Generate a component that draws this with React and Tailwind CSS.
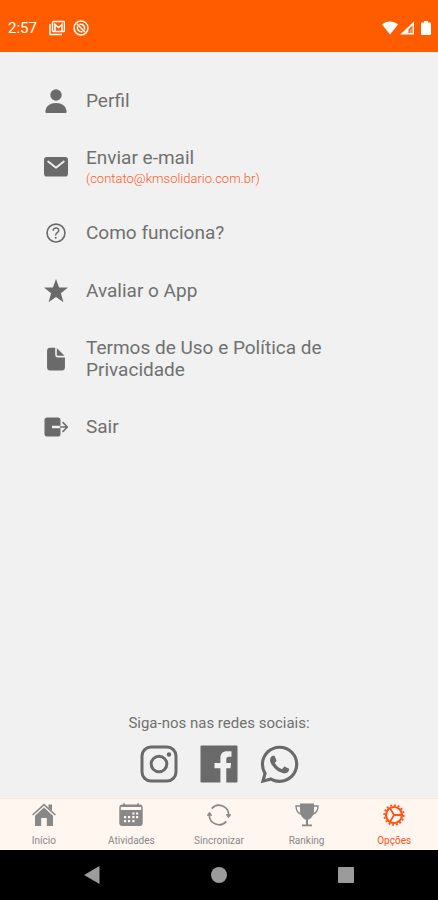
import React from 'react';
import { IoHelpCircleOutline, IoDocument, IoLogoWhatsapp } from 'react-icons/io5';

function PersonIcon() {
    return (
        <svg className="h-6 w-6" viewBox="0 0 24 24" fill="currentColor">
            <circle cx="12" cy="6" r="5.700" />
            <path d="M3 24a1.500 1.500 0 0 1-1.600-1.700C2 17 6 14 12 14s10 3 10.600 8.300A1.500 1.500 0 0 1 21 24z" />
        </svg>
    );
}

function MailIcon() {
    return (
        <svg className="h-6 w-6" viewBox="0 0 24 24" fill="none">
            <rect y="2" width="24" height="19.500" rx="2.800" fill="currentColor" />
            <path d="M4.200 6.500L12 12.800l7.800-6.300" stroke="#f1f1f1" strokeWidth="1.800" strokeLinecap="round" strokeLinejoin="round" />
        </svg>
    );
}

function StarIcon() {
    return (
        <svg className="h-6 w-6" viewBox="0 0 24 24" fill="currentColor">
            <path d="M12 0l3.100 8.400 8.900.2-7.100 5.600 2.500 9L12 18l-7.400 5.200 2.500-9L0 8.600l8.900-.2z" />
        </svg>
    );
}

function ExitIcon() {
    return (
        <svg className="h-6 w-6" viewBox="0 0 24 24" fill="none">
            <path d="M3 2.500h11A2.500 2.500 0 0 1 16.500 5v5.800H8v2.400h8.500V19a2.500 2.500 0 0 1-2.500 2.500H3A2.500 2.500 0 0 1 .5 19V5A2.500 2.500 0 0 1 3 2.500z" fill="currentColor" />
            <path d="M16.500 12H23M19 7.500l4.300 4.500-4.300 4.500" stroke="currentColor" strokeWidth="1.600" strokeLinecap="round" strokeLinejoin="round" />
        </svg>
    );
}

function InstagramIcon() {
    return (
        <svg className="h-[38px] w-[38px]" viewBox="0 0 38 38" fill="none" stroke="currentColor" strokeWidth="3">
            <rect x="2" y="2" width="34" height="34" rx="9" />
            <circle cx="19" cy="19" r="7.800" />
            <circle cx="29" cy="9.500" r="2.200" fill="currentColor" stroke="none" />
        </svg>
    );
}

function FacebookIcon() {
    return (
        <svg className="h-[38px] w-[38px]" viewBox="0 0 38 38" fill="currentColor">
            <path d="M1.500.5h35a1 1 0 0 1 1 1v35a1 1 0 0 1-1 1H26.300V23.200h4.200l.6-5.200h-4.800v-3.500c0-1.800.8-2.700 2.500-2.700H31.500V6.200H27c-4.400 0-6.600 2.600-6.600 7V18H14.500v5.200h5.900v14.300H1.500a1 1 0 0 1-1-1v-35a1 1 0 0 1 1-1z" />
        </svg>
    );
}

function HomeIcon() {
    return (
        <svg className="h-6 w-6" viewBox="0 0 24 24" fill="currentColor">
            <path d="M12 4.500l9 8.200V23h-6.200v-8H9.200v8H3V12.700z" />
            <path d="M.6 12L12 1.600 23.400 12" fill="none" stroke="currentColor" strokeWidth="1.600" />
            <path d="M16.500 1.500h3.500v6.500l-3.500-3.200z" />
        </svg>
    );
}

function CalendarIcon() {
    return (
        <svg className="h-6 w-6" viewBox="0 0 24 24" fill="currentColor">
            <path fillRule="evenodd" d="M3 1.500h1.200V.3h1.600v1.200h12.400V.3h1.600v1.200H21A2.700 2.700 0 0 1 23.700 4v16.500A2.700 2.700 0 0 1 21 23H3A2.700 2.700 0 0 1 .3 20.500V4A2.700 2.700 0 0 1 3 1.500zM1.800 4v3h20.400V4z" />
            <path d="M13.300 9.500h2.200v2h-2.200zM17 9.500h2.200v2H17zM5 13h2.200v2.200H5zM9 13h2.200v2.200H9zM13.300 13h2.200v2.200h-2.200zM17 13h2.200v2.200H17zM5 17h2.200v2.200H5zM9 17h2.200v2.200H9zM13.300 17h2.200v2.200h-2.200z" fill="#fff6f0" />
        </svg>
    );
}

function SyncIcon() {
    return (
        <svg className="h-6 w-6" viewBox="0 0 24 24" fill="none" stroke="currentColor" strokeWidth="1.600">
            <path d="M4.700 5.600A9.700 9.700 0 0 1 21.700 12M19.300 18.400A9.700 9.700 0 0 1 2.300 12" />
            <path d="M19 11.500h5l-2.500 3.500zM0 12.500h5L2.500 9z" fill="currentColor" strokeWidth="0.500" />
        </svg>
    );
}

function TrophyIcon() {
    return (
        <svg className="h-6 w-6" viewBox="0 0 24 24" fill="currentColor">
            <path d="M5 .5h14v6.500c0 5-2.500 8.500-6 9.700V21.500h4V23.200H7v-1.700h4v-4.800C7.500 15.500 5 12 5 7z" />
            <path d="M5.500 3H1c0 4.500 2 7.500 6 8.500M18.500 3H23c0 4.500-2 7.500-6 8.500" fill="none" stroke="currentColor" strokeWidth="1.400" />
        </svg>
    );
}

function CogIcon() {
    return (
        <svg className="h-6 w-6" viewBox="0 0 24 24" fill="none" stroke="currentColor">
            <circle cx="12" cy="12" r="8" strokeWidth="2.200" />
            <circle cx="12" cy="12" r="9.800" strokeWidth="1.800" pathLength="32" strokeDasharray="1 1" />
            <path d="M12 12h8M12 12L8 5.100M12 12l-4 6.900" strokeWidth="1.800" />
        </svg>
    );
}

const options = [
    { label: 'Perfil', icon: <PersonIcon /> },
    { label: 'Enviar e-mail', detail: '(contato@kmsolidario.com.br)', icon: <MailIcon /> },
    { label: 'Como funciona?', icon: <IoHelpCircleOutline className="h-[26px] w-[26px] shrink-0" /> },
    { label: 'Avaliar o App', icon: <StarIcon /> },
    { label: 'Termos de Uso e Política de Privacidade', icon: <IoDocument className="h-[26px] w-[26px] shrink-0" /> },
    { label: 'Sair', icon: <ExitIcon /> },
];

const socials = [
    { name: 'Instagram', icon: <InstagramIcon /> },
    { name: 'Facebook', icon: <FacebookIcon /> },
    { name: 'WhatsApp', icon: <IoLogoWhatsapp className="h-[43px] w-[43px] shrink-0" /> },
];

const tabs = [
    { label: 'Início', icon: <HomeIcon /> },
    { label: 'Atividades', icon: <CalendarIcon /> },
    { label: 'Sincronizar', icon: <SyncIcon /> },
    { label: 'Ranking', icon: <TrophyIcon /> },
    { label: 'Opções', icon: <CogIcon />, active: true },
];

function StatusBar() {
    return (
        <header className="flex items-center justify-between bg-[#ff5c00] pt-4 pr-1.5 pb-3 pl-2 text-white">
            <div className="flex items-center gap-2">
                <span className="mr-1 text-[15px] leading-6">2:57</span>
                <svg className="h-4 w-4" viewBox="0 0 16 16" fill="none" stroke="currentColor" strokeWidth="1.500">
                    <rect x="3.500" y="1.500" width="12" height="10" rx="1" />
                    <path d="M1 4v10.500h12M6 11V4.500l3.500 3 3.500-3V11" />
                </svg>
                <svg className="h-4 w-4" viewBox="0 0 16 16" fill="none" stroke="currentColor" strokeWidth="1.500">
                    <circle cx="8" cy="8" r="7" />
                    <path d="M4 4l8 8M6.500 4.500a4 4 0 0 1 5 5M4.500 6.500a4 4 0 0 0 5 5" />
                </svg>
            </div>
            <div className="flex items-center">
                <svg className="h-4 w-4" viewBox="0 0 16 16" fill="currentColor">
                    <path d="M0 4.500C4.500.5 11.500.5 16 4.500L8 14.500z" />
                </svg>
                <svg className="ml-0.5 h-4 w-4" viewBox="0 0 16 16">
                    <path d="M14 1.500v13H0z" fill="currentColor" />
                    <path d="M8.500 9.500L12.500 5.500V13h-4z" fill="#ff5c00" />
                    <path d="M10 10l1.500-2v5H10z" fill="currentColor" opacity="0.500" />
                </svg>
                <svg className="ml-1 h-4 w-3" viewBox="0 0 12 16" fill="currentColor">
                    <path d="M4 1h4v1.500h2a1 1 0 0 1 1 1V14a1 1 0 0 1-1 1H2a1 1 0 0 1-1-1V3.500a1 1 0 0 1 1-1h2z" />
                </svg>
            </div>
        </header>
    );
}

function App() {
    return (
        <div className="flex min-h-screen flex-col bg-[#f1f1f1] font-[Roboto,sans-serif] text-[#6a6a6a]">
            <StatusBar />

            <main className="flex flex-1 flex-col">
                <ul className="px-11 pt-5">
                    {options.map((option) => (
                        <li key={option.label}>
                            <button className="flex w-full items-center gap-[18px] py-[17px] text-left">
                                <span className="flex h-6 w-6 shrink-0 items-center justify-center">{option.icon}</span>
                                <span className="max-w-[260px] text-[19px] leading-[22px] text-[#707070]">
                                    {option.label}
                                    {option.detail && (
                                        <span className="mt-0.5 block text-[13px] leading-4 font-light text-[#ff5a28]">{option.detail}</span>
                                    )}
                                </span>
                            </button>
                        </li>
                    ))}
                </ul>

                <section className="mt-auto flex flex-col items-center gap-3 pb-[15px]">
                    <p className="text-[15px] leading-5 text-[#707070]">Siga-nos nas redes sociais:</p>
                    <div className="flex gap-[22px]">
                        {socials.map((social) => (
                            <a
                                key={social.name}
                                href="#"
                                aria-label={social.name}
                                className="flex h-[38px] w-[38px] items-center justify-center"
                            >
                                {social.icon}
                            </a>
                        ))}
                    </div>
                </section>
            </main>

            <nav className="grid grid-cols-5 border-t border-[#f3ebe3] bg-[#fff6f0] pt-1 pb-0.5">
                {tabs.map((tab) => (
                    <button
                        key={tab.label}
                        className={`flex flex-col items-center gap-[7px] ${tab.active ? 'text-[#ff5216]' : 'text-[#888]'}`}
                    >
                        {tab.icon}
                        <span className="text-[10px] leading-[14px]">{tab.label}</span>
                    </button>
                ))}
            </nav>

            <footer className="flex h-[50px] items-center justify-center bg-black text-[#9b9b9b]">
                <button className="flex w-[127px] justify-center" aria-label="Voltar">
                    <svg className="h-5 w-5" viewBox="0 0 20 20" fill="currentColor"><path d="M17.500 1v18L2 10z" /></svg>
                </button>
                <button className="flex w-[127px] justify-center" aria-label="Tela inicial">
                    <span className="h-4 w-4 rounded-full bg-current" />
                </button>
                <button className="flex w-[127px] justify-center" aria-label="Recentes">
                    <span className="h-4 w-4 rounded-[1px] bg-current" />
                </button>
            </footer>
        </div>
    );
}

export default App;
